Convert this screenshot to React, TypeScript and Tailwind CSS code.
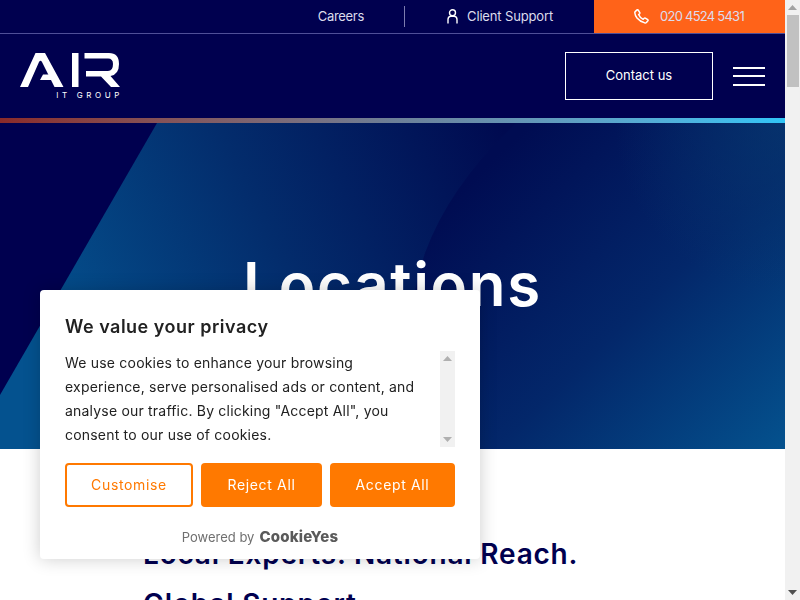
import React from 'react';

function AirLogo() {
  return (
    <div className="flex flex-col items-end w-[100px]">
      <svg width="100" height="34" viewBox="0 0 100 34" fill="#fff" aria-label="AIR">
        <path d="M0 34 L15.5 0 H25 L43.5 34 H34.5 L22 9 Q20.5 6.5 19 9 L8 34 Z" />
        <path d="M20 27 L23 21.5 H31.5 L34 27 Z" />
        <rect x="52" y="0" width="6.5" height="34" />
        <path d="M64.5 0 H89 Q99 0 99 11 Q99 21.5 90.5 23 L100 34 H91 L81 23.5 H66 V18 H88 Q93 18 93 11 Q93 5.5 88 5.5 H64.5 Z" />
      </svg>
      <span className="text-[8px] leading-[8px] tracking-[3.6px] mr-[-3px] mt-1 text-white">IT GROUP</span>
    </div>
  );
}

function UserIcon() {
  return (
    <svg width="11" height="15" viewBox="0 0 11 15" fill="none" stroke="#fff" strokeWidth="1.4">
      <circle cx="5.5" cy="3.8" r="3" />
      <path d="M1 14.5 V10.5 Q1 7.6 3.6 7.2 H7.4 Q10 7.6 10 10.5 V14.5" />
    </svg>
  );
}

function PhoneIcon() {
  return (
    <svg width="15" height="15" viewBox="0 0 15 15" fill="none" stroke="#fff" strokeWidth="1.5" strokeLinejoin="round">
      <path d="M1.2 2.6 L3 0.9 Q3.6 0.5 4.1 1 L5.8 3.6 Q6.1 4.2 5.6 4.7 L4.6 5.6 Q5.6 8.4 9.2 10.3 L10.2 9.3 Q10.7 8.8 11.3 9.1 L13.8 10.7 Q14.3 11.2 13.9 11.8 L12.4 13.5 Q11.8 14.1 10.8 13.9 Q6 12.6 3 9 Q1 6.4 0.8 3.8 Q0.8 3 1.2 2.6 Z" />
    </svg>
  );
}

function TopBar() {
  return (
    <div className="flex items-center justify-end h-[34px] border-b border-[#4f4f98] text-[13px] text-[#dcdcec]">
      <a className="mr-10 tracking-[-0.3px]">Careers</a>
      <span className="w-px h-[21px] bg-[#7c7caf]" />
      <a className="flex items-center gap-[9px] ml-[42px] mr-[41px] tracking-[-0.15px]">
        <UserIcon />
        Client Support
      </a>
      <a className="flex items-center gap-[11px] w-[191px] h-[33px] pl-10 bg-[#ff6319] self-start tracking-[-0.75px]">
        <PhoneIcon />
        020 4524 5431
      </a>
    </div>
  );
}

function Header() {
  return (
    <header className="flex items-center justify-between h-[84px] px-5">
      <AirLogo />
      <div className="flex items-center gap-5">
        <a className="flex items-center justify-center w-[148px] h-12 border border-white text-[13px] text-white">Contact us</a>
        <button type="button" className="flex flex-col gap-[6.5px] w-8" aria-label="Open menu">
          <span className="h-0.5 bg-white" />
          <span className="h-0.5 bg-white" />
          <span className="h-0.5 bg-white" />
        </button>
      </div>
    </header>
  );
}

function HeroArt() {
  return (
    <svg className="absolute inset-0 w-full h-full" viewBox="0 0 785 326" preserveAspectRatio="none">
      <defs>
        <linearGradient id="heroBand" gradientUnits="userSpaceOnUse" x1="60" y1="260" x2="520" y2="40">
          <stop offset="0" stopColor="#04528f" />
          <stop offset="0.5" stopColor="#032c6c" />
          <stop offset="1" stopColor="#000a50" />
        </linearGradient>
        <linearGradient id="heroArc" gradientUnits="userSpaceOnUse" x1="500" y1="30" x2="790" y2="330">
          <stop offset="0" stopColor="#000c52" />
          <stop offset="0.5" stopColor="#03276a" />
          <stop offset="1" stopColor="#04538f" />
        </linearGradient>
        <radialGradient id="heroCorner" gradientUnits="userSpaceOnUse" cx="785" cy="0" r="170">
          <stop offset="0" stopColor="#07386f" stopOpacity="0.7" />
          <stop offset="1" stopColor="#07386f" stopOpacity="0" />
        </radialGradient>
      </defs>
      <rect width="785" height="326" fill="#00004f" />
      <path d="M157 0 H785 V326 H0 V272 Z" fill="url(#heroBand)" />
      <path d="M516 0 Q450 62 425 130 Q405 190 395 326 H785 V0 Z" fill="url(#heroArc)" />
      <rect x="600" width="185" height="180" fill="url(#heroCorner)" />
    </svg>
  );
}

function ScrollArrow({ up, color }: { up?: boolean; color: string }) {
  return (
    <svg width="9" height="5" viewBox="0 0 9 5" fill={color}>
      <path d={up ? 'M4.5 0 L9 5 H0 Z' : 'M0 0 H9 L4.5 5 Z'} />
    </svg>
  );
}

function PageScrollbar() {
  return (
    <div className="flex flex-col items-center w-[15px] h-full shrink-0 bg-[#f1f1f1]">
      <div className="flex items-center justify-center h-[15px] shrink-0">
        <ScrollArrow up color="#a3a3a3" />
      </div>
      <div className="w-[12px] h-[72px] bg-[#c1c1c1]" />
      <div className="flex items-center justify-center h-[15px] mt-auto shrink-0">
        <ScrollArrow color="#505050" />
      </div>
    </div>
  );
}

function CookieBanner() {
  return (
    <div className="fixed left-10 bottom-[41px] w-[440px] h-[269px] rounded bg-white px-[25px] pt-[25px] shadow-[0_0_18px_rgba(0,0,0,0.2)] text-[#212121]">
      <h2 className="text-[18px] leading-[24px] font-semibold tracking-[0.5px]">We value your privacy</h2>
      <div className="flex justify-between mt-[12px] h-24">
        <p className="w-[365px] text-[14px] leading-6 tracking-[0.2px]">
          We use cookies to enhance your browsing experience, serve personalised ads or content, and analyse our traffic. By clicking "Accept All", you consent to our use of cookies.
        </p>
        <div className="flex flex-col items-center justify-between w-[15px] py-[5px] bg-[#f1f1f1]">
          <ScrollArrow up color="#b0b0b0" />
          <ScrollArrow color="#b0b0b0" />
        </div>
      </div>
      <div className="flex gap-2 mt-4 text-[14px] tracking-[0.65px]">
        <button type="button" className="w-[128px] h-11 pb-0.5 rounded-sm border-2 border-[#ff7900] text-[#ff7900]">Customise</button>
        <button type="button" className="w-[121px] h-11 pb-0.5 rounded-sm bg-[#ff7900] text-white">Reject All</button>
        <button type="button" className="w-[125px] h-11 pb-0.5 rounded-sm bg-[#ff7900] text-white">Accept All</button>
      </div>
      <div className="flex items-center justify-center gap-[5px] mt-[19px] text-[#6f6f6f]">
        <span className="text-[13px]">Powered by</span>
        <span className="text-[15px] font-extrabold tracking-[0.2px] text-[#5a5a5a]">CookieYes</span>
      </div>
    </div>
  );
}

export default function App() {
  return (
    <div className="flex h-screen overflow-hidden bg-white font-['Inter',sans-serif]">
      <main className="flex-1 min-w-0">
        <div className="bg-[#00004f]">
          <TopBar />
          <Header />
        </div>
        <div className="h-[5px] bg-gradient-to-r from-[#8a2a2a] via-[#6d7f97] to-[#2fc5f7]" />
        <section className="relative h-[326px] overflow-hidden">
          <HeroArt />
          <h1 className="relative pt-[125px] text-center text-[60px] leading-[72px] font-semibold tracking-[1.7px] text-white">Locations</h1>
        </section>
        <section className="px-[143px] pt-20 text-[#00004f]">
          <h2 className="text-[28px] leading-[50px] font-semibold tracking-[0.8px]">
            Local Experts. National Reach.
            <br />
            Global Support
          </h2>
        </section>
      </main>
      <PageScrollbar />
      <CookieBanner />
    </div>
  );
}
